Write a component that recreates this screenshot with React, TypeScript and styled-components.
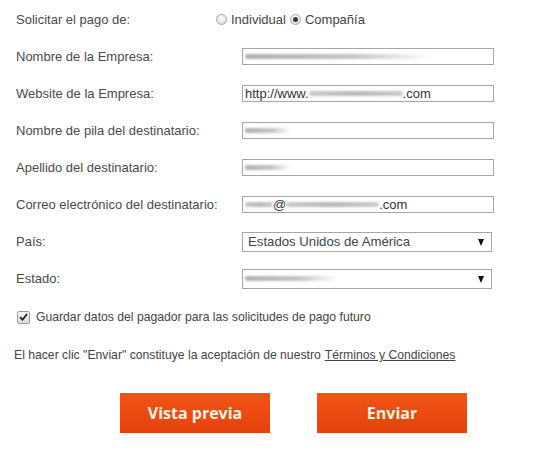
import React from "react";
import styled, { createGlobalStyle } from "styled-components";

const Global = createGlobalStyle`
  html, body { margin: 0; padding: 0; background: #ffffff; }
  body { font-family: "Liberation Sans", Arial, sans-serif; font-size: 13px; color: #4a4a4a; }
`;

const Form = styled.form`
  width: 538px;
  padding: 1px 0 0 16px;
  box-sizing: border-box;
`;

const Row = styled.div`
  display: grid;
  grid-template-columns: 226px 252px;
  align-items: center;
  height: 37px;
`;

const Label = styled.span`
  color: #4a4a4a;
`;

const RadioGroup = styled.div`
  display: flex;
  align-items: center;
  margin-left: -26px;
  color: #444;
`;

const RadioItem = styled.label`
  display: flex;
  align-items: center;
  gap: 4px;
  margin-right: 4px;
`;

const RadioDot = styled.span<{ $checked?: boolean }>`
  width: 11px;
  height: 11px;
  border-radius: 50%;
  box-sizing: border-box;
  border: 1px solid #a9a9a9;
  background: radial-gradient(circle at 50% 35%, #ffffff 0%, #e6e6e6 60%, #cfcfcf 100%);
  display: flex;
  align-items: center;
  justify-content: center;
  &::after {
    content: "";
    width: 5px;
    height: 5px;
    border-radius: 50%;
    background: ${(p) => (p.$checked ? "#3a3a3a" : "transparent")};
  }
`;

const Box = styled.div<{ $h?: number }>`
  position: relative;
  box-sizing: border-box;
  height: ${(p) => p.$h ?? 17}px;
  border: 1px solid #a6a6a6;
  background: #fff;
  display: flex;
  align-items: center;
  padding-left: 2px;
  color: #333;
  font-size: 13px;
  white-space: nowrap;
  overflow: hidden;
`;

const SelectBox = styled(Box)<{ $pad?: number }>`
  width: 250px;
  padding-left: ${(p) => p.$pad ?? 5}px;
  color: #444;
  font-size: 13.2px;
`;

const Smear = styled.span<{ $w: number; $fade?: boolean }>`
  display: inline-block;
  width: ${(p) => p.$w}px;
  height: 5px;
  border-radius: 2px;
  background: ${(p) =>
    p.$fade
      ? "linear-gradient(to right, #b0b0b0 0%, #c6c6c6 60%, rgba(225,225,225,0) 100%)"
      : "linear-gradient(to right, #c9c9c9, #b9b9b9 50%, #cacaca)"};
  filter: blur(0.9px);
`;

const Arrow = styled.span`
  position: absolute;
  right: 7px;
  top: 50%;
  margin-top: -3px;
  width: 0;
  height: 0;
  border-left: 3.5px solid transparent;
  border-right: 3.5px solid transparent;
  border-top: 7px solid #111;
`;

const CheckRow = styled.label`
  display: flex;
  align-items: center;
  gap: 6px;
  height: 40px;
  padding-left: 1px;
  color: #444;
  font-size: 12.2px;
`;

const CheckBox = styled.span`
  width: 13px;
  height: 13px;
  box-sizing: border-box;
  border: 1px solid #9c9c9c;
  border-radius: 2px;
  background: linear-gradient(#f4f4f4, #dcdcdc);
  display: flex;
  align-items: center;
  justify-content: center;
`;

const Terms = styled.p`
  margin: 0 0 0 -2px;
  height: 36px;
  display: flex;
  align-items: center;
  color: #444;
  font-size: 12.2px;
`;

const TermsLink = styled.a`
  color: #444;
  text-decoration: underline;
  margin-left: 4px;
`;

const Buttons = styled.div`
  display: flex;
  gap: 47px;
  margin: 20px 0 0 104px;
`;

const Button = styled.button`
  width: 150px;
  height: 40px;
  border: none;
  background: linear-gradient(#f25416, #e4420b);
  color: #fff3e6;
  font-family: "Open Sans", "DejaVu Sans", sans-serif;
  font-weight: 700;
  font-size: 16px;
  cursor: pointer;
`;

type Field = { label: string; content: React.ReactNode };

const fields: Field[] = [
  { label: "Nombre de la Empresa:", content: <Smear $w={186} $fade /> },
  {
    label: "Website de la Empresa:",
    content: (
      <>
        http://www.<Smear $w={94} />.com
      </>
    ),
  },
  { label: "Nombre de pila del destinatario:", content: <Smear $w={46} $fade /> },
  { label: "Apellido del destinatario:", content: <Smear $w={46} $fade /> },
  {
    label: "Correo electrónico del destinatario:",
    content: (
      <>
        <Smear $w={28} />@<Smear $w={93} />.com
      </>
    ),
  },
];

export default function App() {
  return (
    <>
      <Global />
      <Form onSubmit={(e) => e.preventDefault()}>
        <Row>
          <Label>Solicitar el pago de:</Label>
          <RadioGroup>
            <RadioItem>
              <RadioDot />
              Individual
            </RadioItem>
            <RadioItem>
              <RadioDot $checked />
              Compañía
            </RadioItem>
          </RadioGroup>
        </Row>
        {fields.map((f) => (
          <Row key={f.label}>
            <Label>{f.label}</Label>
            <Box>{f.content}</Box>
          </Row>
        ))}
        <Row>
          <Label>País:</Label>
          <SelectBox $h={20}>
            Estados Unidos de América
            <Arrow />
          </SelectBox>
        </Row>
        <Row>
          <Label>Estado:</Label>
          <SelectBox $h={20} $pad={2}>
            <Smear $w={92} $fade />
            <Arrow />
          </SelectBox>
        </Row>
        <CheckRow>
          <CheckBox>
            <svg width="9" height="8" viewBox="0 0 9 8">
              <path d="M1 4.2 L3.5 6.7 L8 1" fill="none" stroke="#222" strokeWidth="1.8" />
            </svg>
          </CheckBox>
          Guardar datos del pagador para las solicitudes de pago futuro
        </CheckRow>
        <Terms>
          El hacer clic "Enviar" constituye la aceptación de nuestro
          <TermsLink href="#">Términos y Condiciones</TermsLink>
        </Terms>
        <Buttons>
          <Button type="button">Vista previa</Button>
          <Button type="submit">Enviar</Button>
        </Buttons>
      </Form>
    </>
  );
}
